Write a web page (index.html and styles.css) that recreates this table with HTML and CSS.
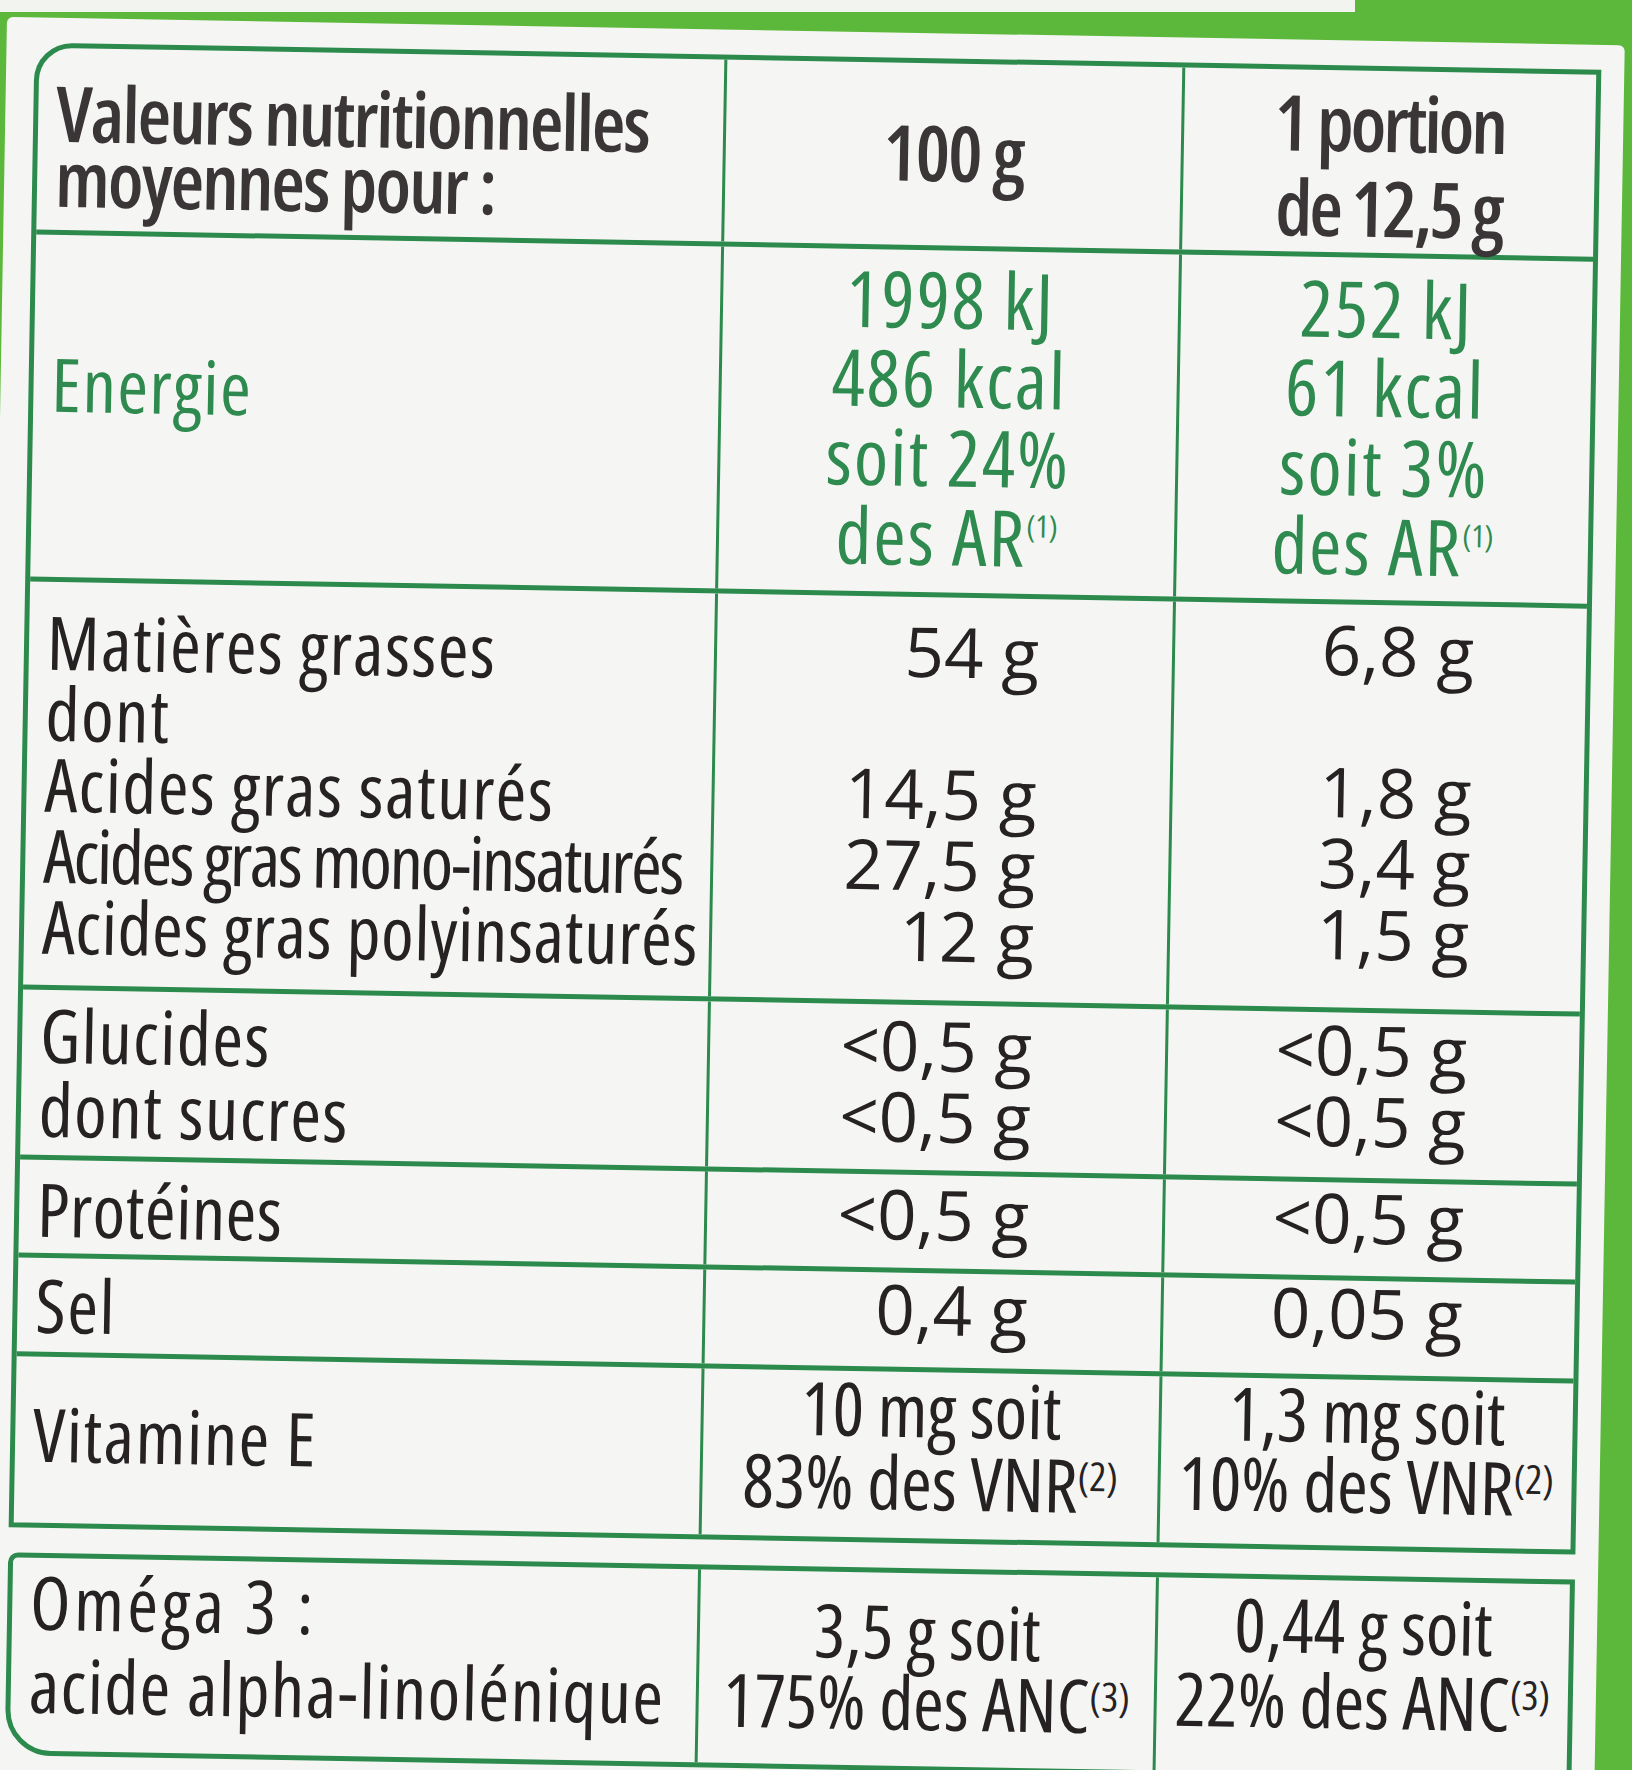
FILE: index.html
```html
<!DOCTYPE html>
<html lang="fr">
<head>
<meta charset="utf-8">
<title>Valeurs nutritionnelles</title>
<link rel="stylesheet" href="styles.css">
</head>
<body>
<div class="strip"></div>
<div class="card">
  <div class="tbl main">
    <div class="row head">
      <div class="cell c1">Valeurs nutritionnelles<br>moyennes pour :</div>
      <div class="cell c2 ctr">100 g</div>
      <div class="cell c3 ctr">1 portion<br>de 12,5 g</div>
    </div>
    <div class="row energy">
      <div class="cell c1">Energie</div>
      <div class="cell c2 ctr">1998 kJ<br>486 kcal<br>soit 24%<br>des AR<span class="sup small">(1)</span></div>
      <div class="cell c3 ctr">252 kJ<br>61 kcal<br>soit 3%<br>des AR<span class="sup small">(1)</span></div>
    </div>
    <div class="row fat num">
      <div class="cell c1">Matières grasses<br>dont<br>Acides gras saturés<br><span class="tight">Acides gras mono-insaturés</span><br><span class="snug">Acides gras polyinsaturés</span></div>
      <div class="cell c2">54 g<br>&nbsp;<br>14,5 g<br>27,5 g<br>12 g</div>
      <div class="cell c3">6,8 g<br>&nbsp;<br>1,8 g<br>3,4 g<br>1,5 g</div>
    </div>
    <div class="row carb num">
      <div class="cell c1">Glucides<br>dont sucres</div>
      <div class="cell c2">&lt;0,5 g<br>&lt;0,5 g</div>
      <div class="cell c3">&lt;0,5 g<br>&lt;0,5 g</div>
    </div>
    <div class="row prot num">
      <div class="cell c1"><span class="snug">Protéines</span></div>
      <div class="cell c2">&lt;0,5 g</div>
      <div class="cell c3">&lt;0,5 g</div>
    </div>
    <div class="row salt num">
      <div class="cell c1">Sel</div>
      <div class="cell c2">0,4 g</div>
      <div class="cell c3">0,05 g</div>
    </div>
    <div class="row vit">
      <div class="cell c1">Vitamine E</div>
      <div class="cell c2 ctr">10 mg soit<br>83% des VNR<span class="sup">(2)</span></div>
      <div class="cell c3 ctr">1,3 mg soit<br>10% des VNR<span class="sup">(2)</span></div>
    </div>
  </div>
  <div class="tbl omega">
    <div class="row om">
      <div class="cell c1"><span class="wide">Oméga 3 :</span><br>acide alpha-linolénique</div>
      <div class="cell c2 ctr">3,5 g soit<br>175% des ANC<span class="sup">(3)</span></div>
      <div class="cell c3 ctr">0,44 g soit<br>22% des ANC<span class="sup">(3)</span></div>
    </div>
  </div>
</div>
</body>
</html>
```
FILE: styles.css
```css
html, body {
  margin: 0;
  padding: 0;
  width: 1632px;
  height: 1770px;
  overflow: hidden;
  background: #5cb83a;
}

.strip {
  width: 1355px;
  height: 12px;
  background: #f2f4f0;
}

.card {
  margin: 5px 0 0 7px;
  width: 1618px;
  height: 1820px;
  box-sizing: border-box;
  padding: 25px 0 0 28px;
  background: #f5f6f3;
  border-radius: 6px 6px 0 0;
  transform: rotate(1deg);
  transform-origin: 0 0;
  font-family: "Open Sans", "DejaVu Sans Condensed", sans-serif;
  color: #262224;
}

.tbl {
  width: 1567px;
  box-sizing: border-box;
  border: 5px solid #2c8a4c;
}

.main {
  border-radius: 38px 0 0 0;
}

.omega {
  margin-top: 25px;
  border-radius: 10px 0 0 46px;
}

.row {
  display: grid;
  grid-template-columns: 685px 458px 414px;
  box-sizing: border-box;
  border-bottom: 5px solid #2c8a4c;
}

.row:last-child {
  border-bottom: 0;
}

.cell {
  box-sizing: border-box;
  white-space: nowrap;
  font-size: 74px;
  font-stretch: 75%;
  font-weight: 460;
  line-height: 71px;
}

.c1 {
  padding-left: 18px;
  font-size: 74px;
  font-weight: 430;
  letter-spacing: 1.5px;
}

.c2, .c3 {
  border-left: 3px solid #2c8a4c;
  text-align: right;
}

/* plain numeric values: wider figures */
.num .c2, .num .c3 {
  font-size: 69px;
  font-stretch: 100%;
  font-weight: 420;
}

.c2 { padding-right: 133px; }
.c3 { padding-right: 112px; }

.c2.ctr, .c3.ctr {
  text-align: center;
  padding-right: 0;
}

.tight {
  letter-spacing: -2.3px;
}

.snug {
  letter-spacing: 0.5px;
}

.fat .snug {
  letter-spacing: 0.7px;
}

.wide {
  letter-spacing: 3.5px;
}

.sup {
  font-size: 40px;
  line-height: 0;
  letter-spacing: 0;
  vertical-align: 0.55em;
}

.sup.small {
  font-size: 31px;
  vertical-align: 0.95em;
}

/* header row */
.head { height: 187px; }
.head .cell {
  color: #3a3537;
  font-size: 77px;
  font-weight: 650;
  letter-spacing: -2px;
  line-height: 65px;
}
.head .c1 { padding-top: 32px; }
.head .c2 { padding-top: 56px; }
.head .c3 { padding-top: 9px; line-height: 85px; letter-spacing: -3px; }

/* energy row */
.energy { height: 347px; }
.energy .cell {
  color: #2f8a4f;
  line-height: 79px;
  font-size: 78px;
  letter-spacing: 2px;
}
.energy .c1 { padding-top: 109px; font-size: 74px; font-weight: 470; letter-spacing: 1.5px; }
.energy .c2 { padding-top: 9px; }
.energy .c3 { padding-top: 11px; }

/* fats */
.fat { height: 408px; }
.fat .c1 { padding-top: 24px; }
.fat .c2 { padding-top: 18px; }
.fat .c3 { padding-top: 9px; }

/* carbohydrates */
.carb { height: 170px; }
.carb .c1 { padding-top: 8px; line-height: 74px; }
.carb .c2 { padding-top: 4px; }
.carb .c3 { padding-top: 1px; }

/* proteins */
.prot { height: 98px; }
.prot .c1 { padding-top: 13px; }
.prot .c2 { padding-top: 8px; line-height: 60px; }
.prot .c3 { padding-top: 4px; line-height: 60px; }

/* salt */
.salt { height: 99px; }
.salt .c1 { padding-top: 11px; }
.salt .c2 { padding-top: 5px; line-height: 60px; }
.salt .c3 { padding-top: 1px; line-height: 60px; }

/* vitamin E */
.vit { height: 166px; }
.vit .c1 { padding-top: 41px; }
.vit .c2 { padding-top: 0; line-height: 73px; }
.vit .c3 { padding-top: 0; line-height: 70px; }

/* omega 3 */
.om { height: 193px; }
.om .c1 { padding-top: 2px; line-height: 83px; }
.om .c2 { padding-top: 22px; }
.om .c3 { padding-top: 7px; line-height: 75px; }
```
